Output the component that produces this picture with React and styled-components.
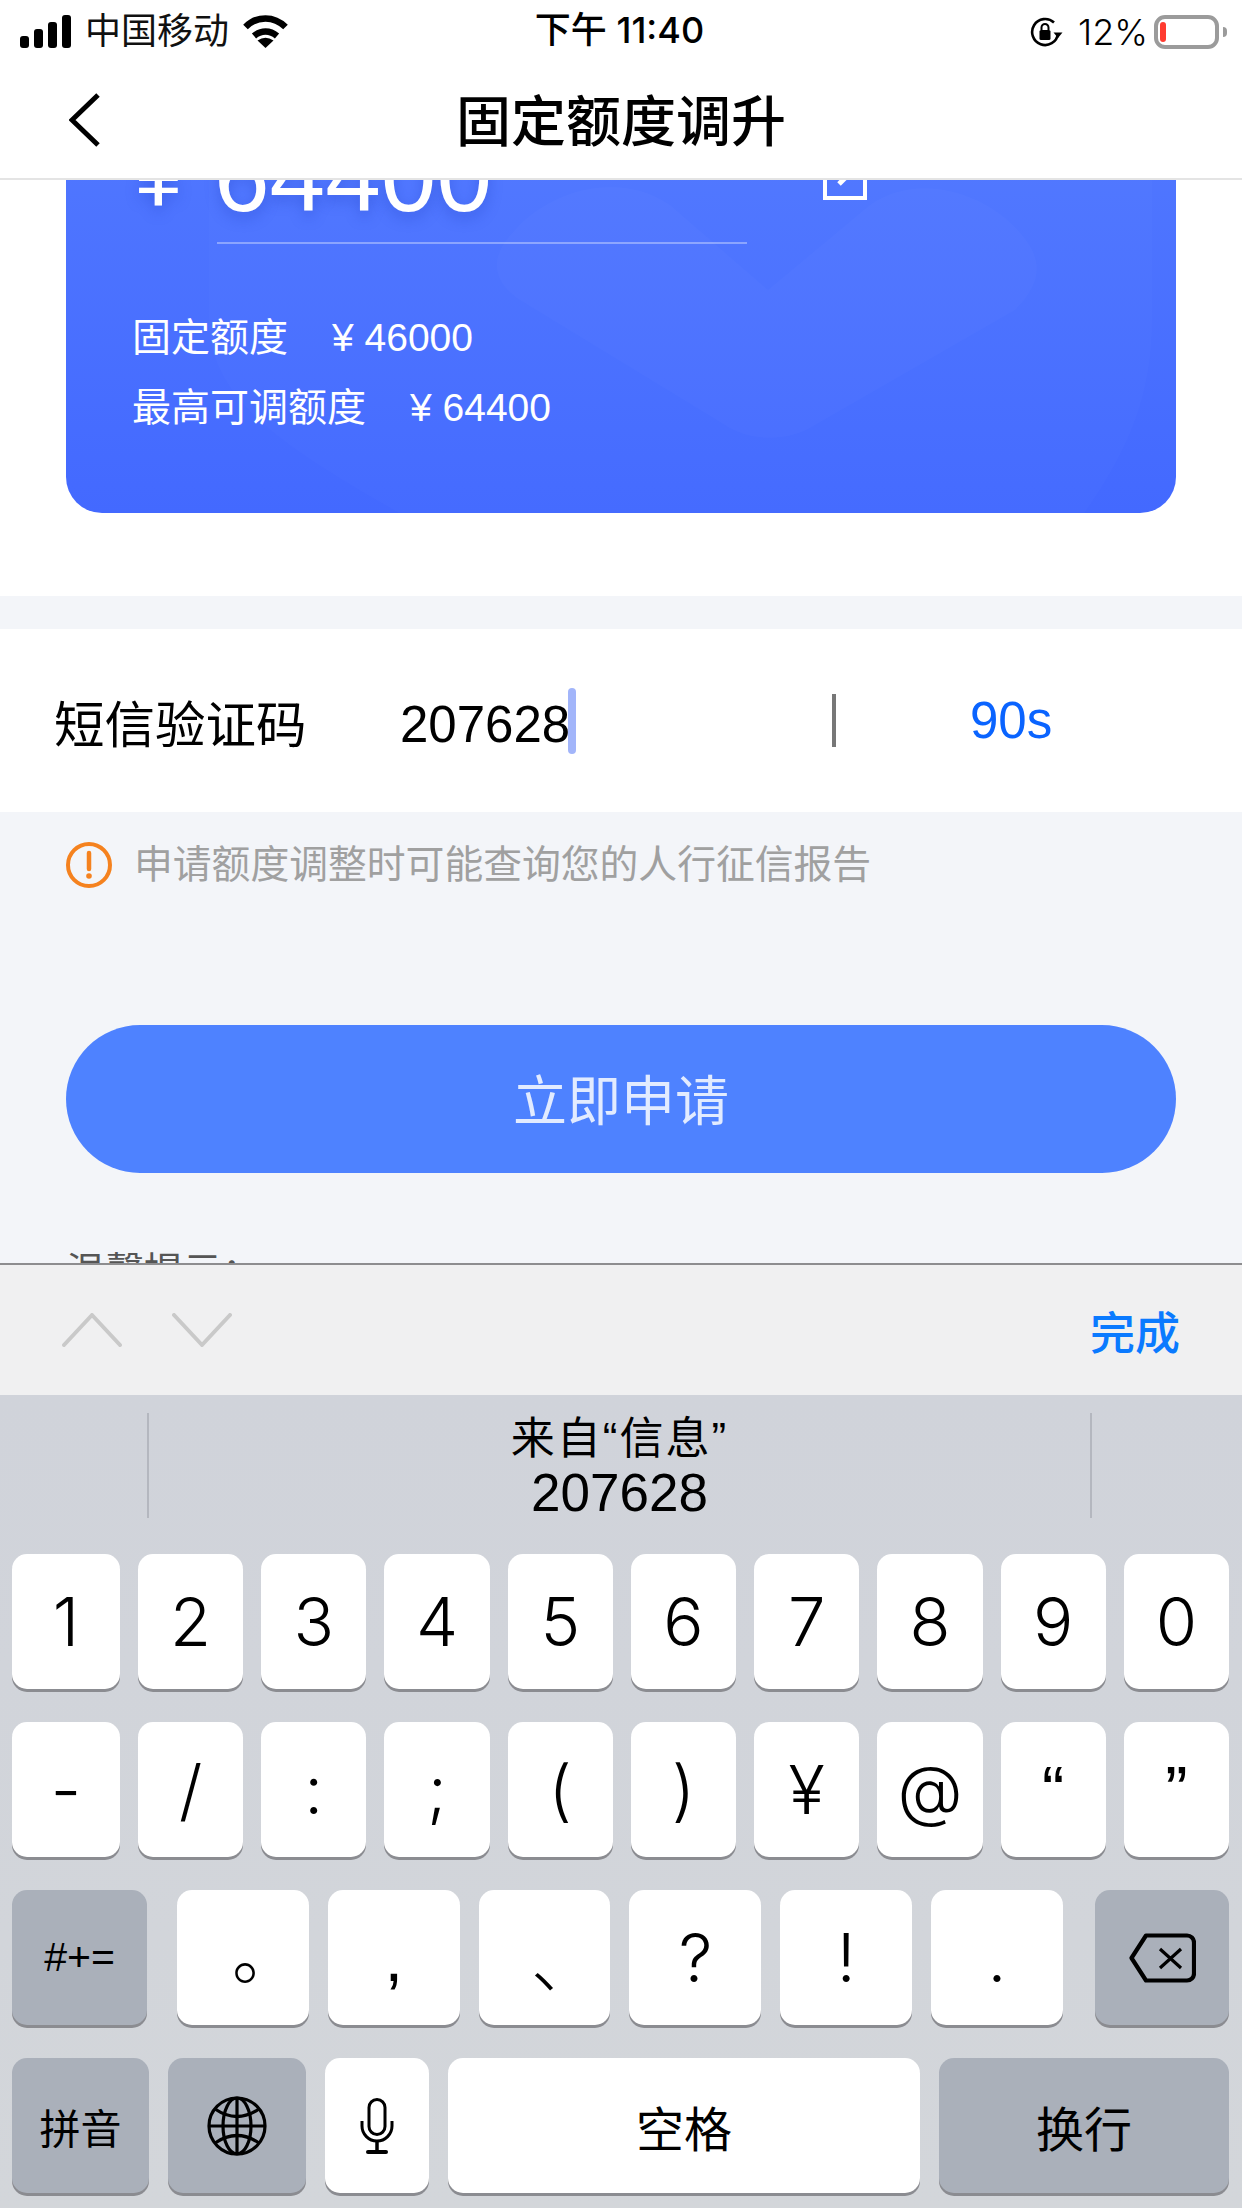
import React from 'react';
import styled, { createGlobalStyle } from 'styled-components';

const SANS = `"Liberation Sans", "Noto Sans CJK SC", sans-serif`;
const KEY_FONT = `Inter, "Noto Sans CJK SC", sans-serif`;

const GlobalStyle = createGlobalStyle`
  html, body {
    margin: 0;
    padding: 0;
    background: #fff;
  }
  * {
    box-sizing: border-box;
  }
`;

const Screen = styled.div`
  width: 1242px;
  height: 2208px;
  display: flex;
  flex-direction: column;
  overflow: hidden;
  background: #fff;
  font-family: ${SANS};
  color: #000;
`;

const StatusBar = styled.div`
  height: 60px;
  flex: none;
  display: grid;
  grid-template-columns: 1fr auto 1fr;
  align-items: center;
  padding: 0 23px 0 20px;
`;

const StatusLeft = styled.div`
  display: flex;
  align-items: center;
  font-size: 36px;
  line-height: 58px;
  color: #111;
`;

const Carrier = styled.span`
  margin: 0 14px 0 13px;
`;

const Clock = styled.div`
  font-size: 36px;
  line-height: 60px;
  font-weight: 500;
  font-family: Inter, "Noto Sans CJK SC", sans-serif;
  white-space: nowrap;
  padding-bottom: 3px;
`;

const StatusRight = styled.div`
  display: flex;
  align-items: center;
  justify-content: flex-end;
`;

const BatteryPct = styled.span`
  font-size: 36px;
  font-family: Inter, sans-serif;
  font-weight: 300;
  margin: 0 6px 0 15px;
`;

const Battery = styled.div`
  width: 65px;
  height: 34px;
  border: 4px solid #9b9b9b;
  border-radius: 11px;
  padding: 3px 2px;
  position: relative;
  &::after {
    content: '';
    position: absolute;
    right: -12px;
    top: 8px;
    width: 4px;
    height: 10px;
    background: #9b9b9b;
    border-radius: 0 4px 4px 0;
  }
`;

const BatteryLevel = styled.div`
  width: 6px;
  height: 100%;
  border-radius: 3px;
  background: #ff3b30;
`;

const NavBar = styled.div`
  height: 120px;
  flex: none;
  display: flex;
  align-items: center;
  justify-content: center;
  position: relative;
  padding-bottom: 4px;
  background: #fff;
  border-bottom: 2px solid #e4e4e4;
  z-index: 2;
`;

const BackIcon = styled.svg`
  position: absolute;
  left: 69px;
  top: 33px;
`;

const NavTitle = styled.h1`
  margin: 0;
  font-size: 55px;
  font-weight: 500;
`;

const Viewport = styled.div`
  flex: 1;
  min-height: 0;
  overflow: hidden;
  background: #f3f5f9;
`;

const ScrolledPage = styled.div`
  margin-top: -100px;
`;

const CardSection = styled.section`
  background: #fff;
  padding: 0 66px 83px;
`;

const LimitCard = styled.div`
  position: relative;
  overflow: hidden;
  height: 433px;
  padding: 38px 67px 0;
  border-radius: 0 0 36px 36px;
  background: linear-gradient(180deg, #5279ff 0%, #4369ff 100%);
  color: #fff;
`;

const CardArt = styled.svg`
  position: absolute;
  left: 0;
  bottom: 0;
`;

const AmountRow = styled.div`
  position: relative;
  display: flex;
  align-items: flex-start;
`;

const YenMark = styled.span`
  width: 84px;
  padding-left: 2px;
  font-size: 84px;
  line-height: 116px;
  text-shadow: 0 6px 14px rgba(30, 60, 190, 0.35);
`;

const AmountField = styled.div`
  width: 530px;
  height: 126px;
  font-size: 100px;
  line-height: 116px;
  text-indent: -3px;
  border-bottom: 2px solid rgba(255, 255, 255, 0.35);
  text-shadow: 0 6px 14px rgba(30, 60, 190, 0.35);
`;

const EditIcon = styled.svg`
  margin: 38px 0 0 76px;
`;

const LimitList = styled.div`
  position: relative;
  margin: 59px 0 0 -1px;
`;

const LimitLine = styled.div`
  display: flex;
  gap: 44px;
  font-size: 39px;
  line-height: 70px;
`;

const FormRow = styled.section`
  margin-top: 33px;
  height: 183px;
  background: #fff;
  display: flex;
  align-items: center;
  padding-left: 54px;
`;

const FormLabel = styled.label`
  width: 346px;
  font-size: 50.5px;
`;

const CodeField = styled.div`
  width: 432px;
  display: flex;
  align-items: center;
  font-size: 51px;
`;

const CodeText = styled.span`
  padding-top: 8px;
`;

const Caret = styled.span`
  width: 8px;
  height: 66px;
  margin-left: -2px;
  border-radius: 4px;
  background: #a2b5fa;
`;

const FieldDivider = styled.span`
  width: 4px;
  height: 53px;
  background: #777;
`;

const Countdown = styled.span`
  margin-left: 134px;
  font-size: 51px;
  color: #0a64ff;
`;

const Notice = styled.div`
  display: flex;
  align-items: center;
  gap: 22px;
  padding: 30px 66px 0;
  font-size: 38.8px;
  line-height: 46px;
  color: #a0a0a0;
`;

const ApplyButton = styled.button`
  display: block;
  width: 1110px;
  height: 148px;
  margin: 137px 66px 0;
  padding: 0 0 4px;
  border: 0;
  border-radius: 74px;
  background: #4e82ff;
  color: #e2ebff;
  font-family: inherit;
  font-size: 54px;
`;

const HintTitle = styled.div`
  margin: 71px 66px 0;
  font-size: 39px;
  line-height: 56px;
  color: #555;
`;

const Toolbar = styled.div`
  height: 132px;
  flex: none;
  display: flex;
  align-items: center;
  padding: 0 62px 0 62px;
  background: #f0f0f1;
  border-top: 2px solid #8d8d8f;
`;

const ArrowGroup = styled.div`
  display: flex;
  gap: 50px;
  flex: 1;
`;

const DoneLabel = styled.span`
  font-size: 45px;
  font-weight: 500;
  color: #0a7aff;
`;

const Keyboard = styled.div`
  height: 813px;
  flex: none;
  background: linear-gradient(180deg, #d0d3da 0%, #d3d6da 100%);
`;

const SuggestBar = styled.div`
  height: 158px;
  padding: 18px 0 0 147px;
`;

const SuggestCell = styled.div`
  width: 945px;
  height: 105px;
  display: flex;
  flex-direction: column;
  align-items: center;
  justify-content: center;
  border-left: 2px solid #b4b7bf;
  border-right: 2px solid #b4b7bf;
`;

const SuggestSource = styled.div`
  font-size: 44px;
  line-height: 54px;
  letter-spacing: 2px;
`;

const SuggestCode = styled.div`
  font-size: 53px;
  line-height: 54px;
`;

const KeyRows = styled.div`
  display: flex;
  flex-direction: column;
  gap: 33px;
  padding: 1px 13px 0 12px;
`;

const KeyRow = styled.div`
  display: flex;
  gap: ${({ $gap }) => $gap ?? 18}px;
`;

const CenterKeys = styled.div`
  flex: 1;
  display: flex;
  gap: 19px;
  margin: 0 32px 0 30px;
`;

const Key = styled.div`
  height: 135px;
  min-width: 0;
  flex: ${({ $width }) => ($width ? `0 0 ${$width}px` : '1 1 0')};
  display: flex;
  align-items: center;
  justify-content: center;
  border-radius: 15px;
  background: ${({ $dark }) => ($dark ? '#aab0ba' : '#fff')};
  box-shadow: 0 3px 0 #8b8c91;
  color: #000;
  font-family: ${({ $plain }) => ($plain ? SANS : KEY_FONT)};
  font-weight: ${({ $plain }) => ($plain ? 400 : 300)};
  font-size: ${({ $size }) => $size || 67}px;
`;

// full-width CJK marks sit in the corner of their em box, pull them back to the key centre
const CjkMark = styled.span`
  margin-right: ${({ $pull }) => -$pull}px;
  padding-bottom: ${({ $lift }) => $lift || 0}px;
`;

const SignalIcon = () => (
  <svg width="52" height="34" viewBox="0 0 52 34">
    <rect x="0" y="21" width="9" height="12" rx="3" fill="#000" />
    <rect x="14" y="14" width="9" height="19" rx="3" fill="#000" />
    <rect x="28" y="7" width="9" height="26" rx="3" fill="#000" />
    <rect x="42" y="0" width="9" height="33" rx="3" fill="#000" />
  </svg>
);

const WifiIcon = () => (
  <svg width="45" height="33" viewBox="0 0 45 33" fill="none" stroke="#000" strokeWidth="6.5">
    <path d="M2.5 12 C14 0.5 31 0.5 42.5 12" />
    <path d="M11 21 C18 15 27 15 34 21" />
    <path d="M22.5 33 L14.5 25.5 Q22.5 20 30.5 25.5 Z" fill="#000" stroke="none" />
  </svg>
);

const RotationLockIcon = () => (
  <svg width="33" height="30" viewBox="0 0 33 30" fill="none" stroke="#000">
    <path d="M28 17 A13 13 0 1 1 24 5.5" strokeWidth="2.6" />
    <path d="M23.5 15.5 L32.5 15.5 L28 21 Z" fill="#000" stroke="none" />
    <rect x="9.5" y="13" width="11" height="10" rx="1.5" fill="#000" stroke="none" />
    <path d="M11.5 13 V10.5 a3.5 3.5 0 0 1 7 0 V13" strokeWidth="2" />
  </svg>
);

const NoticeIcon = () => (
  <svg width="46" height="46" viewBox="0 0 46 46" fill="none">
    <circle cx="23" cy="23" r="21" stroke="#f5821f" strokeWidth="4" />
    <path d="M23 11 V27" stroke="#f5821f" strokeWidth="4.5" strokeLinecap="round" />
    <circle cx="23" cy="34" r="2.8" fill="#f5821f" />
  </svg>
);

const ChevronIcon = ({ points }) => (
  <svg width="60" height="34" viewBox="0 0 60 34" fill="none">
    <polyline points={points} stroke="#c9c9c9" strokeWidth="4" strokeLinecap="round" strokeLinejoin="round" />
  </svg>
);

const DeleteIcon = () => (
  <svg width="67" height="50" viewBox="0 0 67 50" fill="none" stroke="#000">
    <path d="M17 2.5 H58 a7 7 0 0 1 7 7 V40.5 a7 7 0 0 1 -7 7 H17 L2.5 25 Z" strokeWidth="4.2" strokeLinejoin="round" />
    <path d="M31 16 L52 35 M52 16 L31 35" strokeWidth="3.2" />
  </svg>
);

const GlobeIcon = () => (
  <svg width="60" height="60" viewBox="0 0 60 60" fill="none" stroke="#000" strokeWidth="3.2">
    <circle cx="30" cy="30" r="28" />
    <ellipse cx="30" cy="30" rx="14" ry="28" />
    <path d="M30 2 V58 M2 30 H58" />
    <path d="M8 13 Q30 28 52 13 M8 47 Q30 32 52 47" />
  </svg>
);

const MicIcon = () => (
  <svg width="34" height="56" viewBox="0 0 34 56" fill="none" stroke="#000">
    <rect x="9" y="1.5" width="16" height="35" rx="8" strokeWidth="3" />
    <path d="M2 23 V28 a15 15 0 0 0 30 0 V23" strokeWidth="3" />
    <path d="M17 43 V52" strokeWidth="3.5" />
    <path d="M8 54 H26" strokeWidth="4" strokeLinecap="round" />
  </svg>
);

const digitKeys = ['2', '3', '4', '5', '6', '7', '8', '9', '0'];
const symbolKeys = ['/', ':', ';', '(', ')', '¥', '@'];

const App = () => {
  return (
    <Screen>
      <GlobalStyle />
      <StatusBar>
        <StatusLeft>
          <SignalIcon />
          <Carrier>中国移动</Carrier>
          <WifiIcon />
        </StatusLeft>
        <Clock>下午 11:40</Clock>
        <StatusRight>
          <RotationLockIcon />
          <BatteryPct>12%</BatteryPct>
          <Battery>
            <BatteryLevel />
          </Battery>
        </StatusRight>
      </StatusBar>

      <NavBar>
        <BackIcon width="32" height="54" viewBox="0 0 32 54" fill="none">
          <polyline points="29,2 3,27 29,52" stroke="#000" strokeWidth="5" />
        </BackIcon>
        <NavTitle>固定额度调升</NavTitle>
      </NavBar>

      <Viewport>
        <ScrolledPage>
          <CardSection>
            <LimitCard>
              <CardArt width="1110" height="340" viewBox="66 173 1110 340">
                <path
                  d="M209 120 V320 C209 420 330 470 480 560 H1050 C1110 480 1152 420 1152 320 V120 Z"
                  fill="#fff"
                  opacity="0.015"
                />
                <path
                  d="M768 290 L870 205 C920 170 990 195 1022 235 C1045 262 1040 285 1015 310 L815 425 C790 442 750 442 725 425 L520 300 C490 280 490 255 515 230 C550 190 620 170 670 205 Z"
                  fill="#fff"
                  opacity="0.018"
                />
              </CardArt>
              <AmountRow>
                <YenMark>¥</YenMark>
                <AmountField>64400</AmountField>
                <EditIcon width="44" height="44" viewBox="0 0 44 44" fill="none" stroke="#fff" strokeWidth="4">
                  <path d="M26 2 H2 V42 H42 V18" />
                  <path d="M16 28 L40 4" strokeWidth="5" />
                </EditIcon>
              </AmountRow>
              <LimitList>
                <LimitLine>
                  <span>固定额度</span>
                  <span>¥ 46000</span>
                </LimitLine>
                <LimitLine>
                  <span>最高可调额度</span>
                  <span>¥ 64400</span>
                </LimitLine>
              </LimitList>
            </LimitCard>
          </CardSection>

          <FormRow>
            <FormLabel>短信验证码</FormLabel>
            <CodeField>
              <CodeText>207628</CodeText>
              <Caret />
            </CodeField>
            <FieldDivider />
            <Countdown>90s</Countdown>
          </FormRow>

          <Notice>
            <NoticeIcon />
            申请额度调整时可能查询您的人行征信报告
          </Notice>

          <ApplyButton>立即申请</ApplyButton>
          <HintTitle>温馨提示：</HintTitle>
        </ScrolledPage>
      </Viewport>

      <Toolbar>
        <ArrowGroup>
          <ChevronIcon points="2,32 30,2 58,32" />
          <ChevronIcon points="2,2 30,32 58,2" />
        </ArrowGroup>
        <DoneLabel>完成</DoneLabel>
      </Toolbar>

      <Keyboard>
        <SuggestBar>
          <SuggestCell>
            <SuggestSource>来自“信息”</SuggestSource>
            <SuggestCode>207628</SuggestCode>
          </SuggestCell>
        </SuggestBar>
        <KeyRows>
          <KeyRow>
            <Key $width={108}>1</Key>
            {digitKeys.map((k) => (
              <Key key={k}>{k}</Key>
            ))}
          </KeyRow>
          <KeyRow>
            <Key $width={108}>-</Key>
            {symbolKeys.map((k) => (
              <Key key={k}>{k}</Key>
            ))}
            <Key $plain>“</Key>
            <Key $plain>”</Key>
          </KeyRow>
          <KeyRow $gap={0}>
            <Key $dark $plain $width={135} $size={41}>
              #+=
            </Key>
            <CenterKeys>
              <Key>
                <CjkMark $pull={45} $lift={16}>
                  。
                </CjkMark>
              </Key>
              <Key $plain>,</Key>
              <Key>
                <CjkMark $pull={40}>、</CjkMark>
              </Key>
              <Key>?</Key>
              <Key>!</Key>
              <Key>.</Key>
            </CenterKeys>
            <Key $dark $width={134}>
              <DeleteIcon />
            </Key>
          </KeyRow>
          <KeyRow $gap={19}>
            <Key $dark $plain $width={137} $size={41}>
              拼音
            </Key>
            <Key $dark $width={138}>
              <GlobeIcon />
            </Key>
            <Key $width={104}>
              <MicIcon />
            </Key>
            <Key $plain $size={48}>
              空格
            </Key>
            <Key $dark $plain $width={290} $size={48}>
              换行
            </Key>
          </KeyRow>
        </KeyRows>
      </Keyboard>
    </Screen>
  );
};

export default App;
